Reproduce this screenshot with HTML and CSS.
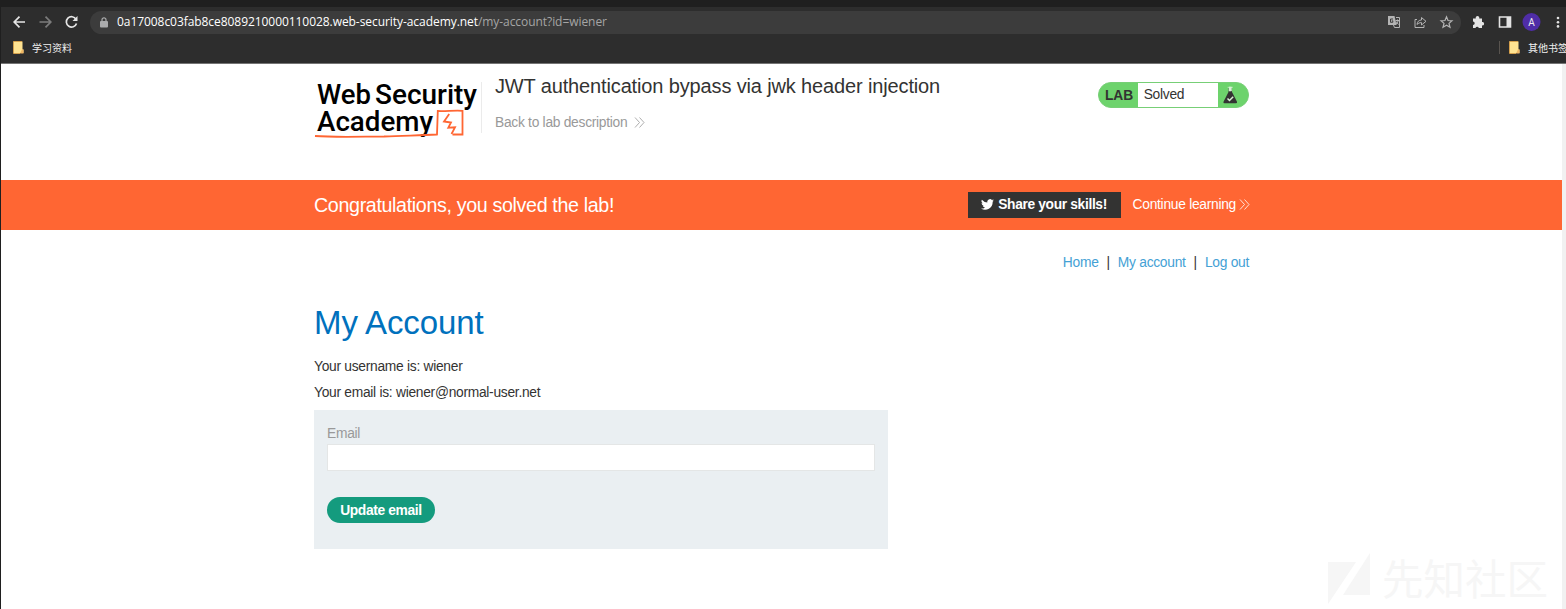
FILE: index.html
```html
<!DOCTYPE html>
<html lang="en">
<head>
<meta charset="utf-8">
<title>My Account</title>
<link rel="stylesheet" href="styles.css">
</head>
<body>
<div class="window">
  <div class="tabstrip"></div>
  <div class="toolbar">
    <svg class="nav-icons" width="90" height="26" viewBox="0 0 90 26" fill="none" stroke-width="1.7">
      <path d="M25 13H14.500M19.500 7.700L14.200 13L19.500 18.300" stroke="#e6e6e6"/>
      <path d="M39.500 13h11M45.500 7.700L50.800 13L45.500 18.300" stroke="#7c7c7c"/>
      <path d="M76 10.200A5.200 5.200 0 1 0 76.500 14.500" stroke="#e6e6e6"/>
      <path d="M77.500 7v5h-5z" fill="#e6e6e6"/>
    </svg>
    <div class="omnibox">
      <svg class="lock" width="8" height="11" viewBox="0 0 8 11"><rect y="4" width="8" height="6.500" rx="1" fill="#aaabac"/><path d="M2 4.500V2.800a2 2 0 0 1 4 0v1.700" fill="none" stroke="#aaabac" stroke-width="1.200"/></svg>
      <span class="url"><span class="host">0a17008c03fab8ce8089210000110028.web-security-academy.net</span><span class="path">/my-account?id=wiener</span></span>
      <svg class="omni-icons" width="66" height="14" viewBox="0 0 66 14" fill="none" stroke="#b4b4b4">
        <path d="M0 1h6.500l2 9H0z" fill="#b4b4b4" stroke="none"/>
        <path d="M5 4H2.500v3.300h2.300V5.800H3.800" stroke="#3c3c3c"/>
        <path d="M8 2.500h3.500v10H6.500L5.500 10M7.500 5.500h3.500M9.500 4.500v1M10.500 5.500L8 9.500M8 6.500l2.500 3"/>
        <path d="M29 4.500H27v8h9V10" />
        <path d="M29 9.500c.3-3 2-4.500 4.500-4.500V2.500L38 6.300L33.500 10V7.600c-2 0-3.300.6-4.500 1.900z"/>
        <path d="M58.500 1.800l1.500 3.700 4 .3-3 2.600 1 3.900-3.500-2.100-3.500 2.100 1-3.900-3-2.600 4-.3z" stroke-width="1.200"/>
      </svg>
    </div>
    <svg class="ext-icons" width="98" height="26" viewBox="0 0 98 26">
      <path d="M5 9.500h2.800a1.800 1.800 0 1 1 3.400 0H14V13a1.700 1.700 0 1 1 0 3.300V19h-3.200a1.700 1.700 0 0 0-3.300 0H5v-3a1.700 1.700 0 0 0 0-3.400z" fill="#e3e3e3"/>
      <path d="M31.500 8h11v10h-11z" fill="#2d2d2d" stroke="#e3e3e3" stroke-width="1.600"/><path d="M38.500 8h4v10h-4z" fill="#e3e3e3"/>
      <circle cx="63.500" cy="13" r="9" fill="#4f2da7"/>
      <text x="63.500" y="16.700" class="avatar">A</text>
      <g fill="#e3e3e3"><circle cx="90" cy="9" r="1.300"/><circle cx="90" cy="13.200" r="1.300"/><circle cx="90" cy="17.400" r="1.300"/></g>
    </svg>
  </div>
  <div class="bookmarks">
    <svg width="11" height="13" viewBox="0 0 11 13"><path d="M.5.500h9v8h1v3.500H.5z" fill="#ffe391"/><path d="M.5 12.500V.500h8.500M.5 12.500h6.500" fill="none" stroke="#d5a04c"/><path d="M7 12.500h3.500v-4H9z" fill="#f0b664"/></svg>
    <span class="bm-name">学习资料</span>
    <span class="bm-divider"></span>
    <svg width="11" height="13" viewBox="0 0 11 13"><path d="M.5.500h9v8h1v3.500H.5z" fill="#ffe391"/><path d="M.5 12.500V.500h8.500M.5 12.500h6.500" fill="none" stroke="#d5a04c"/><path d="M7 12.500h3.500v-4H9z" fill="#f0b664"/></svg>
    <span class="bm-name bm-last">其他书签</span>
  </div>

  <div class="viewport">
    <div class="page">
      <header class="lab-header">
        <svg class="logo" width="167" height="68" viewBox="0 0 167 68">
          <g class="wordmark">
            <text x="3" y="28" textLength="54" lengthAdjust="spacingAndGlyphs">Web</text>
            <text x="61" y="28" textLength="102" lengthAdjust="spacingAndGlyphs">Security</text>
            <text x="3" y="55" textLength="116" lengthAdjust="spacingAndGlyphs">Academy</text>
          </g>
          <g fill="none" stroke="#ff6633" stroke-width="1.800">
            <path d="M1 60C20 61.500 50 60.500 70 60.500C90 59.500 105 59.500 123 58.500L123.800 35C132 35.500 141 34 148.500 34.800V58.500H138.500"/>
            <path d="M135.200 38L130 45.500L137 46.500L134.300 51.700L141 51.300L137.500 58"/>
          </g>
        </svg>
        <div class="title-box">
          <h2>JWT authentication bypass via jwk header injection</h2>
          <a class="back">Back to lab description <svg width="11" height="11" viewBox="0 0 11 11"><path d="M1 .5l4.500 5L1 10.500M5.500.500l4.500 5-4.500 5"/></svg></a>
        </div>
        <div class="status">
          <b>LAB</b><span>Solved</span>
          <svg width="30" height="26" viewBox="0 0 30 26"><path d="M10.500 6h3.500v4l5 9.800q.4 1.500-1 1.500H6.500q-1.500 0-1-1.500L10.500 10z" fill="#333332"/><path d="M9.500 5.300h5.500M11 5h2.500v4H11z" fill="#d5f2d2" stroke="#d5f2d2" stroke-width=".6"/><path d="M9.500 16.500l2 2 3.700-3.700" fill="none" stroke="#d9f3d7" stroke-width="1.500"/></svg>
        </div>
      </header>

      <section class="banner">
        <h4>Congratulations, you solved the lab!</h4>
        <a class="share"><svg width="13" height="11" viewBox="0 0 24 20"><path d="M24 2.400a10 10 0 0 1-2.800.8A5 5 0 0 0 23.300.500a10 10 0 0 1-3.100 1.200 4.900 4.900 0 0 0-8.400 4.500A14 14 0 0 1 1.700 1a4.900 4.900 0 0 0 1.500 6.600A5 5 0 0 1 1 7a4.900 4.900 0 0 0 3.900 4.900 5 5 0 0 1-2.200.1 4.900 4.900 0 0 0 4.600 3.400A10 10 0 0 1 0 17.500 14 14 0 0 0 21.500 5z" fill="#fff"/></svg>Share your skills!</a>
        <a class="continue">Continue learning <svg width="11" height="11" viewBox="0 0 11 11"><path d="M1 .5l4.500 5L1 10.500M5.500.500l4.500 5-4.500 5"/></svg></a>
      </section>

      <nav class="links"><a>Home</a><span>|</span><a>My account</a><span>|</span><a>Log out</a></nav>

      <main class="account">
        <h1>My Account</h1>
        <p>Your username is: wiener</p>
        <p>Your email is: wiener@normal-user.net</p>
        <form class="email-form">
          <label for="email">Email</label>
          <input id="email" type="email">
          <button type="button">Update email</button>
        </form>
      </main>
    </div>
    <div class="scrollbar"></div>
  </div>
  <svg class="watermark" width="224" height="56" viewBox="0 0 224 56">
    <path d="M2 9h28L2 51zM44 0v42H17z"/>
    <text x="56" y="42">先知社区</text>
  </svg>
</div>
</body>
</html>
```

FILE: styles.css
```css
* { box-sizing: border-box; }
body { margin: 0; font-family: "Liberation Sans", Arial, sans-serif; font-size: 13.8px; letter-spacing: -.28px; color: #333332; }
h1, h2, h4, p { margin: 0; font-weight: 400; }
svg { flex: none; }
.window { position: relative; width: 1566px; height: 609px; overflow: hidden; background: #fff; border-left: 1px solid #1f1f1f; display: flex; flex-direction: column; }
.tabstrip { height: 7px; background: #1f1f1f; }
.toolbar { height: 29px; background: #2d2d2d; display: flex; align-items: center; padding-top: 1px; letter-spacing: 0; }
.nav-icons { margin-left: -1px; }
.omnibox { width: 1371px; height: 23px; border-radius: 12px; background: #3c3c3c; display: flex; align-items: center; padding: 0 7px 0 10px; }
.url { margin: -1px 0 0 9px; font-family: "Open Sans", "Noto Sans", sans-serif; font-size: 12px; white-space: nowrap; letter-spacing: -.06px; }
.host { color: #fff; }
.path { color: #a5a5a5; }
.omni-icons { margin-left: auto; }
.ext-icons { margin-left: 7px; }
.avatar { fill: #eee; font: 10px Roboto, sans-serif; text-anchor: middle; }
.bookmarks { height: 28px; background: #2d2d2d; border-bottom: 1px solid #747474; display: flex; align-items: center; padding: 0 0 4px 12px; letter-spacing: 0; }
.bm-name { margin-left: 8px; width: 41px; font: 10px "Noto Sans CJK SC", sans-serif; color: #f0f0f0; white-space: nowrap; }
.bm-last { width: 38px; }
.bm-divider { margin-left: auto; width: 1px; height: 13px; background: #59544f; margin-right: 9px; }
.viewport { flex: 1; display: flex; }
.page { flex: 1; }
.scrollbar { width: 4px; background: #f1f1f1; }
.lab-header { height: 116px; padding: 12px 313px 0; display: flex; align-items: flex-start; }
.wordmark { font: 500 28px Roboto, sans-serif; letter-spacing: 0; fill: #000; }
.title-box { margin-top: 6px; border-left: 1px solid #ebebeb; height: 51px; padding-left: 13px; }
.title-box h2 { margin-top: -7px; font-size: 20px; letter-spacing: -.14px; line-height: 22px; white-space: nowrap; }
.back { display: flex; align-items: center; gap: 7px; margin-top: 18px; line-height: 16px; color: #999; }
.back svg, .continue svg { fill: none; stroke: currentColor; stroke-width: .8; }
.back svg { margin-top: -1px; }
.status { margin: 6px 0 0 auto; width: 151px; height: 26px; border-radius: 13px; border: 1px solid #77cf76; background: #6dd36c; display: flex; align-items: center; overflow: hidden; }
.status b { width: 39px; padding-left: 6px; letter-spacing: -.1px; }
.status span { width: 81px; height: 24px; background: #fff; padding-left: 6px; line-height: 23px; }
.banner { height: 50px; background: #ff6633; color: #fff; padding: 0 312px 0 313px; display: flex; align-items: center; }
.banner h4 { margin-top: -1px; font-size: 19.7px; letter-spacing: -.36px; line-height: 24px; }
.share { margin: -1px 0 0 auto; width: 153px; height: 26px; background: #333332; display: flex; align-items: center; justify-content: center; gap: 4px; padding-bottom: 1px; font-weight: 700; letter-spacing: -.35px; white-space: nowrap; }
.continue { margin: -2px 0 0 12px; display: flex; align-items: center; gap: 3px; white-space: nowrap; }
.links { height: 64px; padding-right: 313px; display: flex; justify-content: flex-end; align-items: center; }
.links a { color: #44a1d5; }
.links span { margin: 0 8px; }
.account { margin-left: 313px; width: 574px; }
.account h1 { margin-top: 9px; height: 51px; line-height: 40px; font-size: 33px; letter-spacing: -.1px; color: #0071bd; }
.account p { height: 26px; line-height: 25px; }
.email-form { margin-top: 4px; height: 139px; background: #eaeff2; padding: 16px 13px; display: flex; flex-direction: column; align-items: flex-start; }
.email-form label { color: #999; line-height: 15px; }
.email-form input { margin: 3px 0 0; width: 548px; height: 27px; border: 1px solid #e4e6e6; background: #fff; }
.email-form button { margin-top: 26px; width: 108px; height: 26px; padding: 0; border: 0; border-radius: 13px; background: #149b7e; color: #fff; font: 700 13.8px "Liberation Sans", Arial, sans-serif; letter-spacing: -.35px; }
.watermark { position: absolute; left: 1325px; top: 553px; fill: #f6f6f6; overflow: visible; }
.watermark text { font: 41.5px "Noto Sans CJK SC", sans-serif; letter-spacing: 0; }
```
